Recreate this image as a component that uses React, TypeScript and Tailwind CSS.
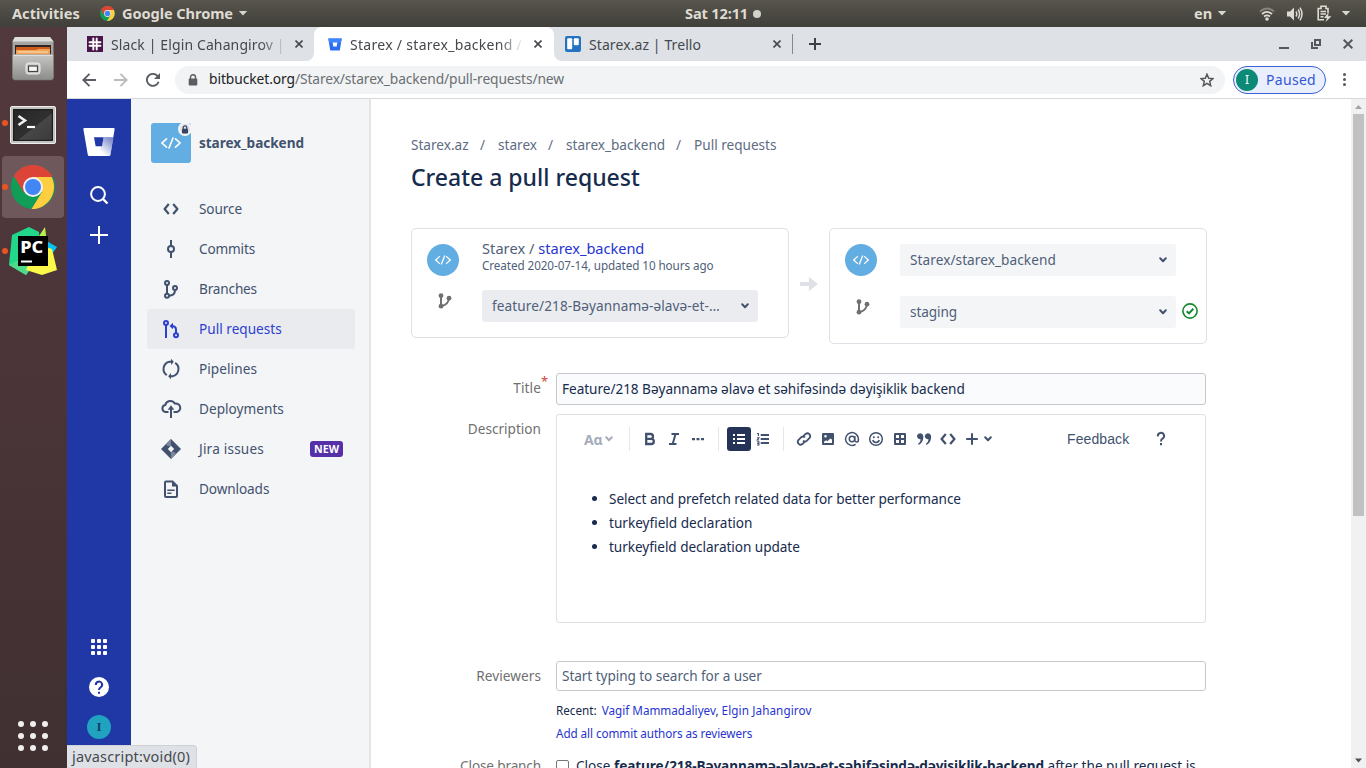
import type { ReactNode } from 'react';

type IconProps = { children: ReactNode; className?: string };

function Icon({ children, className = '' }: IconProps) {
  return (
    <svg
      viewBox="0 0 24 24"
      className={`size-6 shrink-0 ${className}`}
      fill="none"
      stroke="currentColor"
      strokeWidth="2"
    >
      {children}
    </svg>
  );
}

function ChromeLogo({ className }: { className: string }) {
  return (
    <svg viewBox="0 0 44 44" className={className}>
      <circle cx="22" cy="22" r="22" fill="#0f9d58" />
      <path d="M2.95 11 A22 22 0 0 1 41.05 11 L22 12 L13.5 27 Z" fill="#db4437" />
      <path d="M40.6 12 A22 22 0 0 1 20.5 44 L31 27 L22 12 Z" fill="#ffcd40" />
      <path d="M3 11 L12.8 27.5 L22 22 L22 12 L41 12 L40 9.5 A22 22 0 0 0 3 11 Z" fill="#db4437" />
      <circle cx="22" cy="22" r="10" fill="#f1f1f1" />
      <circle cx="22" cy="22" r="8" fill="#4285f4" />
    </svg>
  );
}

function Caret() {
  return (
    <svg viewBox="0 0 10 6" className="h-[5px] w-[10px]">
      <path d="M0 0 H10 L5 5.5 Z" fill="#d8d6d1" />
    </svg>
  );
}

function TopBar() {
  return (
    <header className="flex h-[27px] shrink-0 items-center bg-gradient-to-b from-[#57554c] to-[#403f3a] text-[14.6px] font-bold whitespace-nowrap text-[#dfdbd2]">
      <span className="ml-3 w-[88px]">Activities</span>
      <ChromeLogo className="size-[15px]" />
      <span className="ml-[7px] w-[116px] tracking-[-0.08px]">Google Chrome</span>
      <Caret />
      <span className="ml-[437px] w-[68px] tracking-[-0.15px]">Sat 12:11</span>
      <span className="size-2 rounded-full bg-[#d4d2cd]" />
      <span className="ml-[433px] w-[23px]">en</span>
      <Caret />
      <svg viewBox="0 0 16 14" className="ml-[32px] h-[14px] w-4" fill="none" strokeWidth="1.8">
        <path d="M1 4.5 Q8 -1.5 15 4.5" stroke="#85837d" />
        <path d="M3 7 Q8 2.8 13 7" stroke="#dfdbd2" />
        <path d="M5 9.4 Q8 7.2 11 9.4" stroke="#dfdbd2" />
        <circle cx="8" cy="12" r="1.8" fill="#dfdbd2" />
      </svg>
      <svg viewBox="0 0 16 14" className="ml-3 h-[14px] w-4" fill="none" stroke="#dfdbd2" strokeWidth="1.5">
        <path d="M0 4.5 H3 L7 0.5 V13.5 L3 9.5 H0 Z" fill="#dfdbd2" stroke="none" />
        <path d="M9 4.5 Q10.5 7 9 9.5 M11.2 2.5 Q14 7 11.2 11.5 M13 0.6 Q17 7 13 13.4" />
      </svg>
      <svg viewBox="0 0 15 17" className="ml-[14px] h-[17px] w-[15px]" fill="none" stroke="#dfdbd2" strokeWidth="1.6">
        <path d="M11 8 V3.5 H9 V1.2 H4 V3.5 H1.2 V14.8 H7 M3.5 6.5 H9 M3.5 9 H9 M3.5 11.7 H6.5" />
        <path d="M11.5 7.5 L7 13 H10 L8.5 17 L14.5 11.3 H11.2 Z" fill="#dfdbd2" stroke="none" />
      </svg>
      <span className="ml-[9px]">
        <Caret />
      </span>
    </header>
  );
}

function Running() {
  return <span className="absolute top-[28px] left-[2px] size-[6px] rounded-full bg-[#e95420]" />;
}

function Dock() {
  return (
    <aside className="flex w-[67px] shrink-0 flex-col items-center gap-[2px] bg-gradient-to-b from-[#52393d] via-[#4a3438] to-[#403031] pt-px pr-px">
      <div className="flex h-[62px] w-[62px] items-center justify-center">
        <svg viewBox="0 0 42 44" className="h-11 w-[42px]">
          <defs>
            <linearGradient id="cab" x1="0" y1="0" x2="0" y2="1">
              <stop offset="0" stopColor="#c6c6c4" />
              <stop offset="1" stopColor="#8c8c8a" />
            </linearGradient>
          </defs>
          <path d="M3 0 H38 L41.5 4.5 V40 Q41.5 42 39 42 H3 Q0.5 42 0.5 40 V4.5 Z" fill="#a5a5a3" />
          <path d="M3 0 H38 L41.5 4.5 H0.5 Z" fill="#dededc" />
          <rect x="3" y="8" width="36" height="10" fill="#2b2523" />
          <path d="M4 10 H38 V18 H4 Z" fill="#cf5a1e" />
          <path d="M4 13 H24 L26 12 H38 V18 H4 Z" fill="#f1a355" />
          <path d="M6 15 H36" stroke="#fce3c4" />
          <path d="M0.5 17.5 H41.5 V40 Q41.5 43 39 43 H3 Q0.5 43 0.5 40 Z" fill="url(#cab)" stroke="#777775" strokeWidth=".6" />
          <path d="M1.5 18.2 H40.5" stroke="#e8e8e6" />
          <rect x="14" y="26" width="14" height="11" rx="2.5" fill="#cfcfcd" stroke="#eeeeec" />
          <rect x="16.5" y="29" width="9" height="5.5" fill="#f6f6f4" stroke="#444" strokeWidth="1.2" />
        </svg>
      </div>
      <div className="relative flex h-[62px] w-[66px] items-center justify-center">
        <Running />
        <svg viewBox="0 0 46 38" className="mt-1 h-[38px] w-[46px]">
          <defs>
            <linearGradient id="term" x1="0" y1="0" x2="1" y2="1">
              <stop offset="0" stopColor="#262626" />
              <stop offset=".55" stopColor="#303030" />
              <stop offset=".56" stopColor="#474747" />
              <stop offset="1" stopColor="#3a3a3a" />
            </linearGradient>
          </defs>
          <rect x=".5" y=".5" width="45" height="37" rx="1.5" fill="#c2c2c0" stroke="#eeeeec" />
          <rect x="3.6" y="3.6" width="38.8" height="30.8" fill="url(#term)" stroke="#111" />
          <path d="M8.5 10 L15 14.5 L8.5 19" fill="none" stroke="#eee" strokeWidth="2.6" />
          <path d="M17 21 H25" stroke="#fff" strokeWidth="2.2" />
        </svg>
      </div>
      <div className="relative flex h-[62px] w-[66px] items-center justify-center">
        <div className="flex h-[62px] w-[62px] items-center justify-center rounded bg-[#6e585c]">
          <ChromeLogo className="size-11" />
        </div>
        <Running />
      </div>
      <div className="relative flex h-[62px] w-[66px] items-center justify-center">
        <Running />
        <svg viewBox="0 0 48 48" className="size-12">
          <path d="M3 8 L20 0 L30 5 L30 30 L17 48 L0 38 Z" fill="#21d789" />
          <path d="M30 9 L36 0 L38 16 L24 12 Z" fill="#b6f04d" />
          <path d="M34 12 L48 20 L41 30 L34 28 Z" fill="#07c3f2" />
          <path d="M0 38 L15 30 L24 38 L17 48 Z" fill="#4fd98b" />
          <path d="M36 20 L43 22 L48 43 L33 48 L17 43 L20 36 Z" fill="#fcf84a" />
          <rect x="9" y="9" width="30" height="30" fill="#000" />
          <rect x="12" y="33.5" width="11" height="2" fill="#fff" />
          <text x="11.2" y="25.5" fill="#fff" fontFamily="Noto Sans, sans-serif" fontWeight="800" fontSize="16.5" textLength="23" lengthAdjust="spacingAndGlyphs">
            PC
          </text>
        </svg>
      </div>
      <div className="mt-auto mb-[17px] grid grid-cols-3 gap-[6px]">
        {Array.from({ length: 9 }, (_, i) => (
          <span key={i} className="size-[6px] rounded-full bg-[#f0efee]" />
        ))}
      </div>
    </aside>
  );
}

function CloseX() {
  return (
    <svg viewBox="0 0 8 8" className="size-2" stroke="#45494d" strokeWidth="1.6">
      <path d="M0.5 0.5 L7.5 7.5 M7.5 0.5 L0.5 7.5" />
    </svg>
  );
}

function Tabs() {
  return (
    <div className="flex h-[34px] shrink-0 bg-white text-[14px] whitespace-nowrap text-[#45494d]">
      <div className="flex w-[247px] items-center rounded-br-lg bg-[#dee1e6] pl-5">
        <svg viewBox="0 0 16 16" className="size-4">
          <rect width="16" height="16" fill="#4a154b" />
          <path d="M6.3 2.5 V8 M9.7 8 V13.5 M2.5 9.7 H8 M8 6.3 H13.5 M9.7 2.5 V5 M6.3 11 V13.5 M2.5 6.3 H5 M11 9.7 H13.5" stroke="#fff" strokeWidth="1.9" strokeLinecap="round" />
        </svg>
        <div className="ml-2 w-[176px] overflow-hidden tracking-[0.12px] [mask-image:linear-gradient(to_right,black_85%,transparent)]">
          Slack | Elgin Cahangirov | s
        </div>
        <span className="ml-[8px]">
          <CloseX />
        </span>
      </div>
      <div className="w-60 bg-[#dee1e6]">
        <div className="flex h-full items-center rounded-t-lg bg-white pl-[14px]">
          <svg viewBox="0 0 14 13" className="h-[13px] w-[14px]">
            <path d="M0.3 0.5 H13.7 L11.8 12.5 H2.2 Z" fill="#2c6ef2" />
            <path d="M0.3 0.5 H13.7 L13 4.5 H1 Z" fill="#3f85ff" />
            <path d="M4.6 4.4 H9.4 L8.7 8.6 H5.3 Z" fill="#fff" />
          </svg>
          <div className="ml-[8px] w-[174px] overflow-hidden tracking-[0.3px] [mask-image:linear-gradient(to_right,black_86%,transparent)]">
            Starex / starex_backend /
          </div>
          <span className="ml-[10px]">
            <CloseX />
          </span>
        </div>
      </div>
      <div className="flex flex-1 items-center rounded-bl-lg bg-[#dee1e6] pl-[11px]">
        <svg viewBox="0 0 16 16" className="size-4">
          <rect width="16" height="16" rx="2" fill="#2473c2" />
          <rect x="2.2" y="2.2" width="5" height="11" rx="1" fill="#fff" />
          <rect x="8.8" y="2.2" width="5" height="7" rx="1" fill="#fff" />
        </svg>
        <span className="ml-[8px] w-[184px] tracking-[0.09px]">Starex.az | Trello</span>
        <CloseX />
        <span className="ml-[11px] h-5 w-px bg-[#85888c]" />
        <svg viewBox="0 0 12 12" className="ml-4 size-3" stroke="#3c4043" strokeWidth="2">
          <path d="M6 0 V12 M0 6 H12" />
        </svg>
        <div className="mr-[13px] ml-auto flex items-center gap-[22px]">
          <span className="mt-2 h-[2px] w-[10px] bg-[#54575b]" />
          <svg viewBox="0 0 10 10" className="size-[10px]" fill="none" stroke="#54575b" strokeWidth="2">
            <path d="M4 1 H9 V6 H4 Z M1 3 V9 H7" />
          </svg>
          <svg viewBox="0 0 10 10" className="size-[10px]" stroke="#54575b" strokeWidth="2">
            <path d="M0.7 0.7 L9.3 9.3 M9.3 0.7 L0.7 9.3" />
          </svg>
        </div>
      </div>
    </div>
  );
}

function AddressBar() {
  return (
    <div className="flex h-[38px] shrink-0 items-center border-b border-[#d6d8db] bg-white pl-[15px] whitespace-nowrap">
      <svg viewBox="0 0 14 14" className="size-[14px]" fill="none" stroke="#5a5e62" strokeWidth="1.9">
        <path d="M14 7 H1.5 M7.5 0.8 L1.3 7 L7.5 13.2" />
      </svg>
      <svg viewBox="0 0 14 14" className="ml-[18px] size-[14px]" fill="none" stroke="#babcbe" strokeWidth="1.9">
        <path d="M0 7 H12.5 M6.5 0.8 L12.7 7 L6.5 13.2" />
      </svg>
      <svg viewBox="0 0 14 14" className="ml-[18px] size-[14px]" fill="none" stroke="#5a5e62" strokeWidth="1.9">
        <path d="M12.6 8.8 A6 6 0 1 1 11.4 2.9 L12.2 3.8" />
        <path d="M14 0 V6 H8 Z" fill="#5a5e62" stroke="none" />
      </svg>
      <div className="ml-[15px] flex h-7 w-[1050px] items-center rounded-full bg-[#f1f3f4] pl-[13px] text-[13.8px]">
        <svg viewBox="0 0 10 12" className="h-3 w-[10px]">
          <path d="M2.5 5 V3.3 A2.5 2.5 0 0 1 7.5 3.3 V5" fill="none" stroke="#5a5e62" strokeWidth="1.4" />
          <rect x=".7" y="4.5" width="8.6" height="7" rx="1" fill="#5a5e62" />
        </svg>
        <span className="ml-[11px] tracking-[-0.07px] text-[#202124]">bitbucket.org</span>
        <span className="tracking-[-0.11px] text-[#6b6f73]">/Starex/starex_backend/pull-requests/new</span>
        <svg viewBox="0 0 14 14" className="mr-[11px] ml-auto size-[14px]" fill="none" stroke="#55595d" strokeWidth="1.5">
          <path d="M7 1.2 L8.7 5.2 L13 5.6 L9.7 8.4 L10.7 12.7 L7 10.4 L3.3 12.7 L4.3 8.4 L1 5.6 L5.3 5.2 Z" />
        </svg>
      </div>
      <div className="ml-2 flex h-7 w-[93px] items-center rounded-full border border-[#3a62d6] bg-[#e9effc] pl-[2px] text-[14px] text-[#3458d0]">
        <span className="flex size-[22px] items-center justify-center rounded-full bg-[#0b8a78] text-[12px] text-white">I</span>
        <span className="ml-2 tracking-[0.3px]">Paused</span>
      </div>
      <div className="ml-[17px] flex flex-col gap-[2px]">
        <span className="size-[3px] rounded-full bg-[#55595d]" />
        <span className="size-[3px] rounded-full bg-[#55595d]" />
        <span className="size-[3px] rounded-full bg-[#55595d]" />
      </div>
    </div>
  );
}

function GlobalNav() {
  return (
    <nav className="flex w-16 shrink-0 flex-col items-center bg-[#2038a6] text-white">
      <svg viewBox="0 0 32 28" className="mt-[29px] h-7 w-8">
        <defs>
          <linearGradient id="bb" x1="1" y1=".25" x2=".45" y2=".75">
            <stop offset="0" stopColor="#fff" stopOpacity=".45" />
            <stop offset="1" stopColor="#fff" />
          </linearGradient>
        </defs>
        <path
          fillRule="evenodd"
          d="M1.2 0 H30.6 Q31.8 0 31.6 1.2 L27.4 26.8 Q27.2 28 26 28 H6.2 Q5 28 4.8 26.8 L0.4 1.2 Q0.2 0 1.2 0 Z M11 9.3 L12.7 18.5 H19 L20.7 9.3 Z"
          fill="#fff"
        />
        <path d="M20.7 9.3 H30.3 L27.4 26.8 Q27.2 28 26 28 H8 L18.9 18.5 Z" fill="#2038a6" />
        <path d="M20.7 9.3 H30.3 L27.4 26.8 Q27.2 28 26 28 H6.2 L12.7 18.5 H19 Z" fill="url(#bb)" />
      </svg>
      <Icon className="mt-[27px]">
        <circle cx="11" cy="11" r="6.9" />
        <path d="M16 16 L20.5 20.5" strokeWidth="2.4" />
      </Icon>
      <Icon className="mt-4">
        <path d="M12 3 V21 M3 12 H21" />
      </Icon>
      <div className="mt-auto grid grid-cols-3 gap-[2px]">
        {Array.from({ length: 9 }, (_, i) => (
          <span key={i} className="size-1 rounded-[1px] bg-white" />
        ))}
      </div>
      <div className="mt-[22px] flex size-5 items-center justify-center rounded-full bg-white">
        <svg viewBox="0 0 20 20" className="size-5" fill="none" stroke="#2038a6" strokeWidth="2">
          <path d="M6.9 8 A3.1 3.1 0 1 1 11.6 10.3 Q10 11.2 10 13" />
          <path d="M10 14.7 V16.8" />
        </svg>
      </div>
      <div className="mt-[18px] mb-[29px] flex size-6 items-center justify-center rounded-full bg-[#1fa3bf] font-['Liberation_Serif',serif] text-[12px] font-bold text-[#123a63]">
        I
      </div>
    </nav>
  );
}

const NAV: { label: string; track: string; icon: ReactNode; active?: boolean; badge?: string }[] = [
  {
    label: 'Source',
    track: 'tracking-[-0.1px]',
    icon: <path d="M9.8 7 L5.6 12 L9.8 17 M14.2 7 L18.4 12 L14.2 17" strokeWidth="2.2" strokeLinejoin="round" />,
  },
  {
    label: 'Commits',
    track: 'tracking-[-0.17px]',
    icon: (
      <>
        <circle cx="12" cy="12" r="3" />
        <path d="M12 3 V9 M12 15 V21" />
      </>
    ),
  },
  {
    label: 'Branches',
    track: 'tracking-[-0.17px]',
    icon: (
      <>
        <circle cx="8" cy="6" r="2" />
        <circle cx="8" cy="18.7" r="2" />
        <circle cx="16" cy="11" r="2" />
        <path d="M8 8 V17 M16 13 Q16 18.5 10 18.7" />
      </>
    ),
  },
  {
    label: 'Pull requests',
    track: 'tracking-[0.02px]',
    active: true,
    icon: (
      <>
        <circle cx="7" cy="6" r="2" />
        <path d="M7 8 V21" />
        <circle cx="17" cy="18.2" r="2" />
        <path d="M17 16.2 V12.5 Q17 9 12.5 9" />
        <path d="M10.5 9 L14 5.8 V12.2 Z" fill="currentColor" stroke="none" />
      </>
    ),
  },
  {
    label: 'Pipelines',
    track: 'tracking-[0.07px]',
    icon: (
      <>
        <path d="M7.8 18.2 A7.4 7.4 0 0 1 10.5 4.8 H12.6" />
        <path d="M16.2 5.8 A7.4 7.4 0 0 1 13.5 19.2 H11.4" />
        <path d="M12 1.8 L14.8 4.8 L12 8 Z M12 22.2 L9.2 19.2 L12 16 Z" fill="currentColor" stroke="none" />
      </>
    ),
  },
  {
    label: 'Deployments',
    track: 'tracking-[0.03px]',
    icon: (
      <>
        <path d="M9.5 15 H6.5 A3.6 3.6 0 0 1 6.3 7.9 A5.2 5.2 0 0 1 15.8 6.6 A4.3 4.3 0 0 1 18 15 H14.5" />
        <path d="M12 21 V11.5" />
        <path d="M12 8.3 L15.3 12.7 H8.7 Z" fill="currentColor" stroke="none" />
      </>
    ),
  },
  {
    label: 'Jira issues',
    track: 'tracking-[0.2px]',
    badge: 'NEW',
    icon: (
      <g stroke="none">
        <path d="M12 2 L22 12 L12 22 L2 12 Z" fill="#42526e" />
        <path d="M12 2 L7.2 6.9 Q7.5 10 12 9 Z" fill="#7a869a" />
        <path d="M12 22 L16.8 17.1 Q16.5 14 12 15 Z" fill="#7a869a" />
        <path d="M12 8.8 L15.2 12 L12 15.2 L8.8 12 Z" fill="#f4f5f7" />
      </g>
    ),
  },
  {
    label: 'Downloads',
    track: 'tracking-[-0.1px]',
    icon: (
      <>
        <path d="M6 5.5 Q6 4.5 7 4.5 H13.5 L18 9 V19 Q18 20 17 20 H7 Q6 20 6 19 Z" />
        <path d="M13 4 V9.5 H18.5 Z" fill="currentColor" stroke="none" />
        <path d="M8.3 13.3 H15.7 M8.3 16.3 H12.5" strokeWidth="1.6" />
      </>
    ),
  },
];

function CodeGlyph({ className }: { className: string }) {
  return (
    <svg viewBox="0 0 20 12" className={className} fill="none" stroke="#fff" strokeWidth="1.6" strokeLinecap="round">
      <path d="M5.5 1.8 L1 6 L5.5 10.2 M14.5 1.8 L19 6 L14.5 10.2 M12 1 L8 11" />
    </svg>
  );
}

function Sidebar() {
  return (
    <aside className="flex w-60 shrink-0 flex-col border-r-2 border-[#e3e4e8] bg-[#f4f5f7] pt-6 text-[13.6px] whitespace-nowrap text-[#42526e]">
      <div className="ml-5 flex items-center">
        <div className="relative flex size-10 items-center justify-center rounded-[3px] bg-[#62aee2]">
          <CodeGlyph className="h-3 w-5" />
          <span className="absolute -top-[1px] -right-[1px] flex size-[14px] items-center justify-center rounded-full border-2 border-[#f4f5f7] bg-[#dfe1e6]">
            <svg viewBox="0 0 8 9" className="h-[9px] w-2 shrink-0">
              <path d="M2.2 4 V2.7 A1.8 1.8 0 0 1 5.8 2.7 V4" fill="none" stroke="#344563" strokeWidth="1.2" />
              <rect x="1" y="3.7" width="6" height="4.8" rx=".8" fill="#344563" />
            </svg>
          </span>
        </div>
        <span className="ml-2 font-bold tracking-[-0.05px]">starex_backend</span>
      </div>
      <div className="mt-[26px] flex flex-col px-4">
        {NAV.map((n) => (
          <div
            key={n.label}
            className={`-mr-[2px] flex h-10 items-center rounded-[3px] pr-3 pl-3 ${n.active ? 'bg-[#eaebef] text-[#2c3fd0]' : ''}`}
          >
            <Icon>{n.icon}</Icon>
            <span className={`ml-4 ${n.track}`}>{n.label}</span>
            {n.badge && (
              <span className="ml-auto flex h-4 w-[33px] items-center justify-center rounded-[3px] bg-[#5630a8] text-[10.7px] font-bold text-white">
                {n.badge}
              </span>
            )}
          </div>
        ))}
      </div>
    </aside>
  );
}

function Chevron({ className = '' }: { className?: string }) {
  return (
    <svg viewBox="0 0 8 6" className={`h-[6px] w-2 ${className}`} fill="none" stroke="currentColor" strokeWidth="2" strokeLinecap="round" strokeLinejoin="round">
      <path d="M1.2 1.3 L4 4.2 L6.8 1.3" />
    </svg>
  );
}

function Select({ children, tone, track }: { children: ReactNode; tone: string; track: string }) {
  return (
    <div className={`flex h-8 w-[276px] items-center justify-between rounded-[3px] pr-[9px] pl-[10px] text-[13.6px] text-[#505f79] ${tone} ${track}`}>
      <span>{children}</span>
      <Chevron className="text-[#42526e]" />
    </div>
  );
}

function RepoAvatar() {
  return (
    <div className="flex size-8 items-center justify-center rounded-full bg-[#62aee2]">
      <CodeGlyph className="h-[10px] w-4" />
    </div>
  );
}

function BranchMark({ className }: { className: string }) {
  return (
    <svg viewBox="0 0 14 16" className={`h-4 w-[14px] ${className}`} fill="none" stroke="#707070" strokeWidth="2">
      <path d="M3 3 V13 M3.5 13 Q10.5 11.5 11 5" />
      <circle cx="3" cy="2.7" r="2.4" fill="#707070" stroke="none" />
      <circle cx="3" cy="13.2" r="2.4" fill="#707070" stroke="none" />
      <circle cx="11" cy="5.2" r="2.4" fill="#707070" stroke="none" />
    </svg>
  );
}

function Branches() {
  return (
    <div className="mt-[35px] flex h-[116px] items-start">
      <div className="flex h-[110px] w-[378px] rounded-[5px] border border-[#dfe1e6] pt-[15px] pl-[15px]">
        <div className="w-[55px]">
          <RepoAvatar />
          <BranchMark className="mt-[17px] ml-[11px]" />
        </div>
        <div className="whitespace-nowrap text-[#505f79]">
          <div className="-mt-[6px] h-[20px] text-[14.6px] leading-5">
            <span className="tracking-[0.05px]">Starex / </span>
            <span className="tracking-[-0.04px] text-[#2734cf]">starex_backend</span>
          </div>
          <div className="mb-[18px] h-[14px] text-[11.7px] leading-[14px] tracking-[-0.08px]">
            Created 2020-07-14, updated 10 hours ago
          </div>
          <Select tone="bg-[#ebecf0]" track="tracking-[0.1px]">
            feature/218-Bəyannamə-əlavə-et-…
          </Select>
        </div>
      </div>
      <div className="flex w-10 justify-center pt-[48px]">
        <svg viewBox="0 0 18 16" className="h-4 w-[18px]" fill="#dfe1e6">
          <path d="M0 6 H9 V1 L18 8 L9 15 V10 H0 Z" />
        </svg>
      </div>
      <div className="flex h-[116px] w-[378px] rounded-[5px] border border-[#dfe1e6] pt-[15px] pl-[15px]">
        <div className="w-[55px]">
          <RepoAvatar />
          <BranchMark className="mt-[23px] ml-[11px]" />
        </div>
        <div className="flex flex-col gap-5 whitespace-nowrap">
          <Select tone="bg-[#f4f5f7]" track="tracking-[0.08px]">
            Starex/starex_backend
          </Select>
          <Select tone="bg-[#f4f5f7]" track="tracking-[-0.1px]">
            staging
          </Select>
        </div>
        <svg viewBox="0 0 16 16" className="mt-[59px] ml-[6px] size-4" fill="none" stroke="#14892c">
          <circle cx="8" cy="8" r="7.1" strokeWidth="1.6" />
          <path d="M4.7 8.2 L7 10.4 L11.3 5.8" strokeWidth="2" />
        </svg>
      </div>
    </div>
  );
}

function Sep({ className = '' }: { className?: string }) {
  return <span className={`h-6 w-px bg-[#e4e6ea] ${className}`} />;
}

function Toolbar() {
  return (
    <div className="flex h-12 items-center pl-[27px] text-[#42526e]">
      <span className="w-[21px] text-[14px] font-bold tracking-[-0.2px] text-[#a5adba]">Aɑ</span>
      <Chevron className="text-[#a5adba]" />
      <Sep className="ml-4" />
      <Icon className="ml-2">
        <path d="M8.2 7 H12.6 A2.4 2.4 0 0 1 12.6 11.8 H8.2 Z M8.2 11.8 H13.2 A2.6 2.6 0 0 1 13.2 17 H8.2 Z" strokeWidth="2.3" />
      </Icon>
      <Icon>
        <path d="M9.5 7 H17 M7 17 H14.5 M13.5 7 L10.7 17" />
      </Icon>
      <Icon>
        <path d="M6 11 H9 V13.2 H6 Z M10.5 11 H13.5 V13.2 H10.5 Z M15 11 H18 V13.2 H15 Z" fill="currentColor" stroke="none" />
      </Icon>
      <Sep className="ml-2" />
      <span className="ml-2 flex size-6 items-center justify-center rounded-[3px] bg-[#253358] text-white">
        <Icon>
          <path d="M6 8 H8 M10 8 H18 M6 12 H8 M10 12 H18 M6 16 H8 M10 16 H18" />
        </Icon>
      </span>
      <Icon>
        <path d="M9.7 8 H18 M9.7 12 H18 M9.7 16 H18" />
        <path d="M6 6.5 H7.4 V9 M6 10.8 H8 L6.2 13 H8.2 M6 14.8 H7.9 V18 H6 M6.3 16.4 H7.9" strokeWidth="1.1" />
      </Icon>
      <Sep className="ml-2" />
      <Icon className="ml-2">
        <path d="M11.3 9.2 L13.6 6.9 A2.9 2.9 0 0 1 17.6 11 L15 13.6 A2.9 2.9 0 0 1 11 13.6 M12.7 14.8 L10.4 17.1 A2.9 2.9 0 0 1 6.4 13 L9 10.4 A2.9 2.9 0 0 1 13 10.4" strokeWidth="1.8" />
      </Icon>
      <Icon>
        <path fillRule="evenodd" d="M7 6 H17 Q18 6 18 7 V17 Q18 18 17 18 H7 Q6 18 6 17 V7 Q6 6 7 6 Z M9.5 8 A1.3 1.3 0 1 0 9.5 10.6 A1.3 1.3 0 1 0 9.5 8 Z M8 16 H16 V12.5 L14.2 11.5 L11.5 14.3 L10.2 13.3 L8 14.8 Z" fill="currentColor" stroke="none" />
      </Icon>
      <Icon>
        <g strokeWidth="1.5">
          <circle cx="12" cy="12" r="2.7" />
          <path d="M14.8 9 V13.2 A1.8 1.8 0 0 0 18.4 13 V12 A6.4 6.4 0 1 0 15.6 17.3" />
        </g>
      </Icon>
      <Icon>
        <circle cx="12" cy="12" r="6.3" strokeWidth="1.5" />
        <path d="M8.8 13 Q9.3 15.4 12 15.4 Q14.7 15.4 15.2 13" strokeWidth="1.5" />
        <circle cx="9.8" cy="10.3" r="1" fill="currentColor" stroke="none" />
        <circle cx="14.2" cy="10.3" r="1" fill="currentColor" stroke="none" />
      </Icon>
      <Icon>
        <path d="M7 7 H17 V17 H7 Z M12 7 V17 M7 12 H17" strokeLinejoin="round" />
      </Icon>
      <Icon>
        <path d="M5 8.8 A3.2 3.2 0 0 1 11.3 9 C11.5 13 10 16.5 6.5 18 L6.2 16.5 C7.8 15.5 8.6 14 8.6 12.2 A3.2 3.2 0 0 1 5 8.8 Z M12.8 8.8 A3.2 3.2 0 0 1 19.1 9 C19.3 13 17.8 16.5 14.3 18 L14 16.5 C15.6 15.5 16.4 14 16.4 12.2 A3.2 3.2 0 0 1 12.8 8.8 Z" fill="currentColor" stroke="none" />
      </Icon>
      <Icon>
        <path d="M9.8 7 L5.6 12 L9.8 17 M14.2 7 L18.4 12 L14.2 17" strokeWidth="2.2" />
      </Icon>
      <Icon>
        <path d="M12 6.2 V17.8 M6.2 12 H17.8" />
      </Icon>
      <Chevron />
      <span className="ml-[75px] w-[62px] font-['Liberation_Sans',sans-serif] text-[14px] tracking-[0.1px] text-[#42526e]">
        Feedback
      </span>
      <Icon className="ml-5">
        <path d="M8.9 9.3 A3.1 3.1 0 1 1 13.8 11.4 Q12 12.3 12 14.4" />
        <path d="M12 16 V18.2" />
      </Icon>
    </div>
  );
}

function Label({ children, className = '' }: { children: ReactNode; className?: string }) {
  return (
    <div className={`w-[130px] shrink-0 text-right text-[13.6px] leading-[30px] whitespace-nowrap text-[#707070] ${className}`}>
      {children}
    </div>
  );
}

function Form() {
  return (
    <div className="mt-[29px] text-[13.6px] text-[#172b4d]">
      <div className="flex">
        <Label className="relative mr-[15px] tracking-[0.1px]">
          Title
          <span className="absolute top-[-7px] left-[130px] text-[13px] text-[#d04437]">*</span>
        </Label>
        <div className="flex h-8 w-[650px] items-center rounded-[3px] border border-[#c6c8cc] bg-[#fafbfc] pl-[5px] tracking-[-0.04px] whitespace-nowrap">
          Feature/218 Bəyannamə əlavə et səhifəsində dəyişiklik backend
        </div>
      </div>
      <div className="mt-[9px] flex">
        <Label className="mr-[15px]">Description</Label>
        <div className="h-[209px] w-[650px] rounded-[3px] border border-[#dfe1e6]">
          <Toolbar />
          <ul className="mt-6 list-disc pl-[52px] leading-6">
            <li className="tracking-[-0.05px]">Select and prefetch related data for better performance</li>
            <li>turkeyfield declaration</li>
            <li className="tracking-[-0.05px]">turkeyfield declaration update</li>
          </ul>
        </div>
      </div>
      <div className="mt-[38px] flex">
        <Label className="mr-[15px] tracking-[0.08px]">Reviewers</Label>
        <div className="w-[650px]">
          <div className="flex h-[30px] items-center rounded-[3px] border border-[#c6c8cc] pl-[5px] tracking-[-0.06px] text-[#505f79]">
            Start typing to search for a user
          </div>
          <div className="mt-2 h-[23px] text-[11.7px] leading-[23px]">
            Recent: <span className="ml-[2px] text-[#2734cf]">Vagif Mammadaliyev</span>,{' '}
            <span className="tracking-[0.1px] text-[#2734cf]">Elgin Jahangirov</span>
          </div>
          <div className="h-[23px] text-[11.7px] leading-[23px] tracking-[-0.07px] text-[#2734cf]">
            Add all commit authors as reviewers
          </div>
        </div>
      </div>
      <div className="mt-[6px] flex whitespace-nowrap">
        <Label className="mr-[15px] tracking-[-0.15px]">Close branch</Label>
        <span className="mt-[9px] size-[13px] rounded-[2px] border border-[#767676] bg-white" />
        <span className="ml-[7px] leading-[30px]">
          Close <b className="tracking-[-0.09px]">feature/218-Bəyannamə-əlavə-et-səhifəsində-dəyişiklik-backend</b> after the pull
          request is
        </span>
      </div>
    </div>
  );
}

function Crumbs() {
  const slash = <span className="w-[29px] pr-[2px] text-center">/</span>;
  return (
    <div className="flex h-5 items-center text-[13.6px] whitespace-nowrap text-[#5e6c84]">
      <span className="w-[58px]">Starex.az</span>
      {slash}
      <span className="w-[39px]">starex</span>
      {slash}
      <span className="w-[99px]">starex_backend</span>
      {slash}
      <span>Pull requests</span>
    </div>
  );
}

function Scrollbar() {
  return (
    <div className="flex w-[15px] shrink-0 flex-col items-center bg-[#f1f1f1]">
      <svg viewBox="0 0 15 15" className="size-[15px]">
        <path d="M4 10 L7.5 6 L11 10 Z" fill="#a3a3a3" />
      </svg>
      <div className="h-[402px] w-[11px] bg-[#c1c1c1]" />
      <svg viewBox="0 0 15 15" className="mt-auto size-[15px]">
        <path d="M4 5.5 L7.5 9.5 L11 5.5 Z" fill="#505050" />
      </svg>
    </div>
  );
}

export default function App() {
  return (
    <div className="relative flex h-[768px] w-[1366px] flex-col overflow-hidden bg-white font-['Noto_Sans','Open_Sans',sans-serif]">
      <TopBar />
      <div className="flex min-h-0 flex-1">
        <Dock />
        <div className="flex min-w-0 flex-1 flex-col">
          <Tabs />
          <AddressBar />
          <div className="flex min-h-0 flex-1">
            <GlobalNav />
            <Sidebar />
            <main className="min-w-0 flex-1 overflow-hidden pt-9 pl-10">
              <Crumbs />
              <h1 className="mt-[6px] h-8 text-[23px] leading-8 font-medium text-[#172b4d]">Create a pull request</h1>
              <Branches />
              <Form />
            </main>
            <Scrollbar />
          </div>
        </div>
      </div>
      <div className="absolute bottom-0 left-[67px] flex h-[23px] w-[130px] items-center rounded-tr border-t border-r border-[#cfd1d5] bg-[#dee1e6] pl-[5px] text-[14.5px] tracking-[0.18px] whitespace-nowrap text-[#45494d]">
        javascript:void(0)
      </div>
    </div>
  );
}
